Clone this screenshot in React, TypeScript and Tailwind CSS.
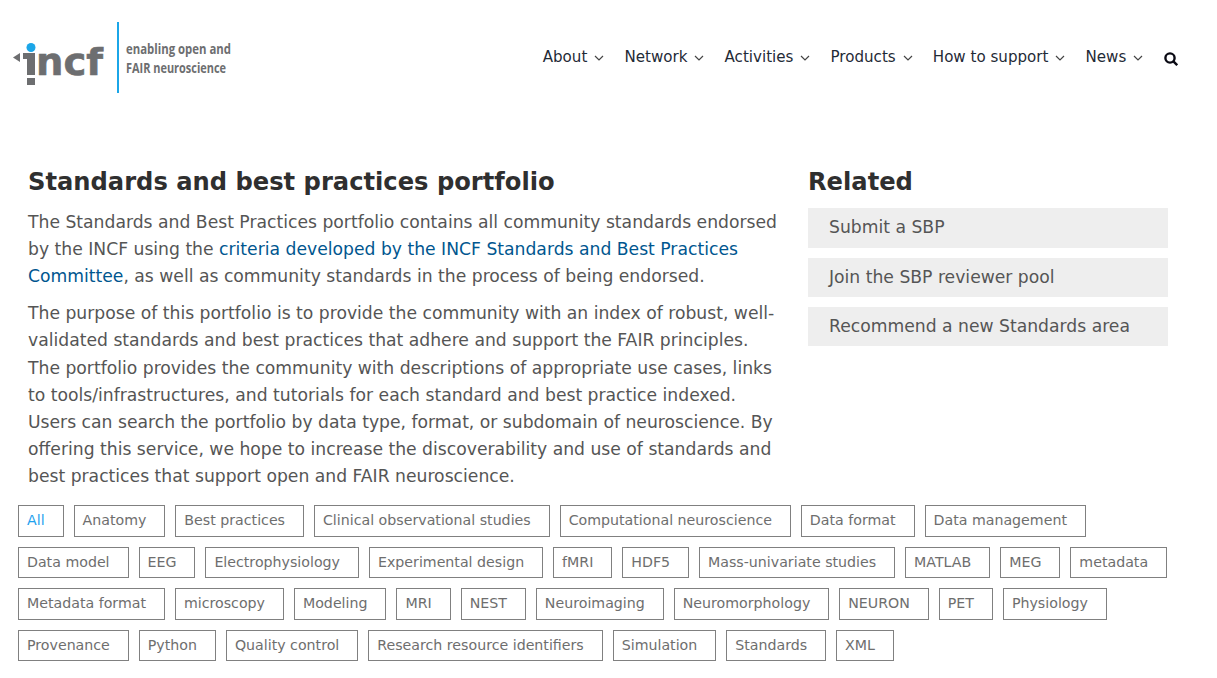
const nav = ["About", "Network", "Activities", "Products", "How to support", "News"]

const related = ["Submit a SBP", "Join the SBP reviewer pool", "Recommend a new Standards area"]

const tags = [
    "All", "Anatomy", "Best practices", "Clinical observational studies", "Computational neuroscience", "Data format", "Data management",
    "Data model", "EEG", "Electrophysiology", "Experimental design", "fMRI", "HDF5", "Mass-univariate studies", "MATLAB", "MEG", "metadata",
    "Metadata format", "microscopy", "Modeling", "MRI", "NEST", "Neuroimaging", "Neuromorphology", "NEURON", "PET", "Physiology",
    "Provenance", "Python", "Quality control", "Research resource identifiers", "Simulation", "Standards", "XML",
]

function Logo() {
    return (
        <svg width="290" height="74" viewBox="0 0 290 74" className="block shrink-0">
            <path d="M13 37.5 L20 33 V42 Z" fill="#6d6e70" />
            <circle cx="31" cy="27.5" r="4.5" fill="#1ba6e8" />
            <rect x="23" y="33" width="12" height="6" fill="#6d6e70" />
            <rect x="27" y="33" width="8" height="22" fill="#6d6e70" />
            <rect x="27" y="58" width="8" height="7" fill="#6d6e70" />
            <text x="36" y="55" textLength="67" lengthAdjust="spacingAndGlyphs" fontFamily="'DejaVu Sans', sans-serif" fontWeight="700" fontSize="38" stroke="#6d6e70" strokeWidth="0.6" fill="#6d6e70">ncf</text>
            <rect x="117" y="2" width="2" height="71" fill="#1ba6e8" />
            <text x="126" y="34" textLength="105" lengthAdjust="spacingAndGlyphs" fontFamily="'Open Sans', sans-serif" fontWeight="700" fontSize="15" fill="#6d6e70">enabling open and</text>
            <text x="126" y="53" textLength="100" lengthAdjust="spacingAndGlyphs" fontFamily="'Open Sans', sans-serif" fontWeight="700" fontSize="15" fill="#6d6e70">FAIR neuroscience</text>
        </svg>
    )
}

function Chevron() {
    return (
        <svg width="10" height="6" viewBox="0 0 10 6" fill="none" stroke="#444" strokeWidth="1.2" className="ml-[7px] mt-[2px]">
            <path d="M1 1l4 4 4-4" />
        </svg>
    )
}

export default function App() {
    return (
        <div className="w-[1217px] h-[678px] overflow-hidden bg-white font-['DejaVu_Sans',sans-serif]">
            <header className="flex h-[113px] items-start justify-between">
                <div className="pt-[20px]">
                    <Logo />
                </div>
                <nav className="flex items-center gap-[20.1px] pt-[46px] pr-[38.6px] text-[15.1px] leading-[22px] text-[#1f2a36]">
                    {nav.map((n) => (
                        <div key={n} className="flex items-center">
                            <span>{n}</span>
                            <Chevron />
                        </div>
                    ))}
                    <svg width="14" height="14" viewBox="0 0 14 14" fill="none" stroke="#0a0a14" strokeWidth="2.4" className="ml-[1px] mt-[3px]">
                        <circle cx="6" cy="6" r="4.6" />
                        <path d="M9.2 9.2l4 4" />
                    </svg>
                </nav>
            </header>

            <main className="flex pl-[28px] h-[392px]">
                <div className="w-[780px] pt-[53px] text-[17.2px] leading-[27.2px] text-[#555]">
                    <h1 className="text-[24.2px] leading-[30px] font-bold text-[#2f2f2f] mb-[12px] mt-[1px]">Standards and best practices portfolio</h1>
                    <p className="mb-[9.5px] w-[752px]">
                        The Standards and Best Practices portfolio contains all community standards endorsed by the INCF using the{" "}
                        <a className="text-[#00568f]">criteria developed by the INCF Standards and Best Practices Committee</a>, as well as community standards in the process of being endorsed.
                    </p>
                    <p className="w-[752px]">
                        The purpose of this portfolio is to provide the community with an index of robust, well-validated standards and best practices that adhere and support the FAIR principles. The portfolio provides the community with descriptions of appropriate use cases, links to tools/infrastructures, and tutorials for each standard and best practice indexed. Users can search the portfolio by data type, format, or subdomain of neuroscience. By offering this service, we hope to increase the discoverability and use of standards and best practices that support open and FAIR neuroscience.
                    </p>
                </div>
                <aside className="w-[360px] pt-[54px]">
                    <h2 className="text-[24.2px] leading-[30px] font-bold text-[#2f2f2f] mb-[11.45px]">Related</h2>
                    <div className="flex flex-col gap-[10px]">
                        {related.map((r) => (
                            <div key={r} className="h-[39.3px] bg-[#eee] pl-[21px] text-[17.2px] leading-[39.7px] text-[#555]">{r}</div>
                        ))}
                    </div>
                </aside>
            </main>

            <div className="flex flex-wrap gap-x-[10px] gap-y-[10px] pl-[18px] w-[1190px]">
                {tags.map((t) => (
                    <div key={t} className={`h-[31.6px] border border-[#808080] pl-[8px] pr-[17.95px] text-[14.2px] leading-[28.1px] ${t === "All" ? "text-[#1fa2ee]" : "text-[#6e6e6e]"}`}>
                        {t}
                    </div>
                ))}
            </div>
        </div>
    )
}
